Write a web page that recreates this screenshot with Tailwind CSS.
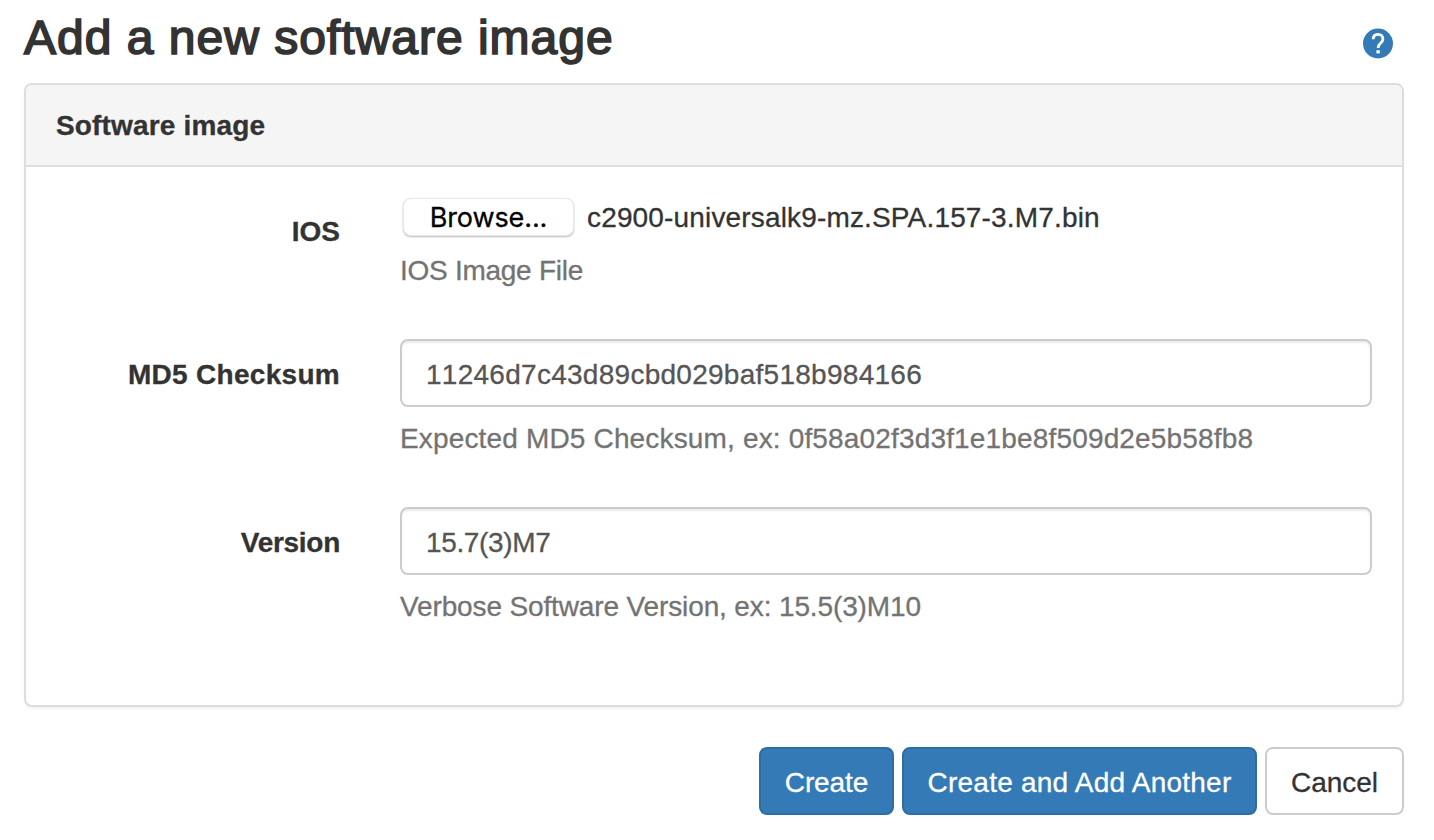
<!DOCTYPE html>
<html lang="en">
<head>
<meta charset="utf-8">
<title>Add a new software image</title>
<script src="https://cdn.jsdelivr.net/npm/@tailwindcss/browser@4"></script>
</head>
<body class="h-[840px] overflow-hidden bg-white pl-6 pr-[30px] font-['Liberation_Sans',Arial,sans-serif] text-[28px] leading-10 text-[#333] [-webkit-text-stroke:0.3px_currentColor]">
<header class="flex h-[83px] items-start justify-between pr-[10px]">
<h1 class="mt-[11px] whitespace-nowrap text-[48px] leading-[53px] font-medium tracking-[1px] [-webkit-text-stroke:1.7px_#333]">Add a new software image</h1>
<svg class="mt-7 size-[32px]" viewBox="0 0 32 32"><circle cx="16" cy="15.500" r="15" fill="#337ab7"/><path d="M11.200 11.300C11.200 8 13.200 6.300 16 6.300s4.900 1.700 4.900 4.600c0 4.200-4.800 4-4.800 9" fill="none" stroke="#fff" stroke-width="2.800"/><path d="M14.400 22.200h3.400v3.200h-3.400z" fill="#fff"/></svg>
</header>
<main>
<section class="h-[624px] rounded-lg border-2 border-[#ddd] shadow-[0_2px_2px_rgba(0,0,0,0.05)]">
<h2 class="flex h-[82px] items-center rounded-t-md border-b-2 border-[#ddd] bg-[#f5f5f5] px-[30px] pt-[2px] font-bold tracking-[0.16px]">Software image</h2>
<div class="grid grid-cols-[314px_972px] gap-x-[60px] pt-[30px]">
<div class="pt-[15px] text-right font-bold">IOS</div>
<div class="h-[142px]"><div class="flex items-center gap-[13px] pt-px pl-[3px]"><button class="mb-[2px] flex h-[38px] w-[171px] items-center justify-center rounded-lg border border-[#e8e8e8] bg-white pt-[2px] font-[Inter,sans-serif] text-[27px] tracking-[-0.1px] text-black shadow-[0_1px_2px_rgba(0,0,0,0.28)]">Browse...</button><span class="tracking-[0.16px]">c2900-universalk9-mz.SPA.157-3.M7.bin</span></div><p class="mt-[13px] tracking-[-0.27px] text-[#737373]">IOS Image File</p></div>
<div class="pt-[16px] text-right font-bold tracking-[0.3px]">MD5 Checksum</div>
<div class="h-[168px]"><div class="flex h-[68px] items-center rounded-lg border-2 border-[#ccc] px-6 pt-[3px] tracking-[0.27px] text-[#555] shadow-[inset_0_2px_2px_rgba(0,0,0,0.075)] [font-kerning:none]">11246d7c43d89cbd029baf518b984166</div><p class="mt-3 tracking-[0.16px] text-[#737373]">Expected MD5 Checksum, ex: 0f58a02f3d3f1e1be8f509d2e5b58fb8</p></div>
<div class="pt-[16px] text-right font-bold tracking-[-0.28px]">Version</div>
<div><div class="flex h-[68px] items-center rounded-lg border-2 border-[#ccc] px-6 pt-[3px] tracking-[-0.35px] text-[#555] shadow-[inset_0_2px_2px_rgba(0,0,0,0.075)]">15.7(3)M7</div><p class="mt-3 tracking-[-0.13px] text-[#737373]">Verbose Software Version, ex: 15.5(3)M10</p></div>
</div>
</section>
<div class="mt-10 flex justify-end gap-2">
<button class="h-[68px] w-[135px] rounded-lg border-2 border-[#2e6da4] bg-[#337ab7] pt-[3px] tracking-[-0.1px] text-white">Create</button>
<button class="h-[68px] w-[355px] rounded-lg border-2 border-[#2e6da4] bg-[#337ab7] pt-[3px] tracking-[0.23px] text-white">Create and Add Another</button>
<button class="h-[68px] w-[139px] rounded-lg border-2 border-[#ccc] bg-white pt-[3px]">Cancel</button>
</div>
</main>
</body>
</html>
